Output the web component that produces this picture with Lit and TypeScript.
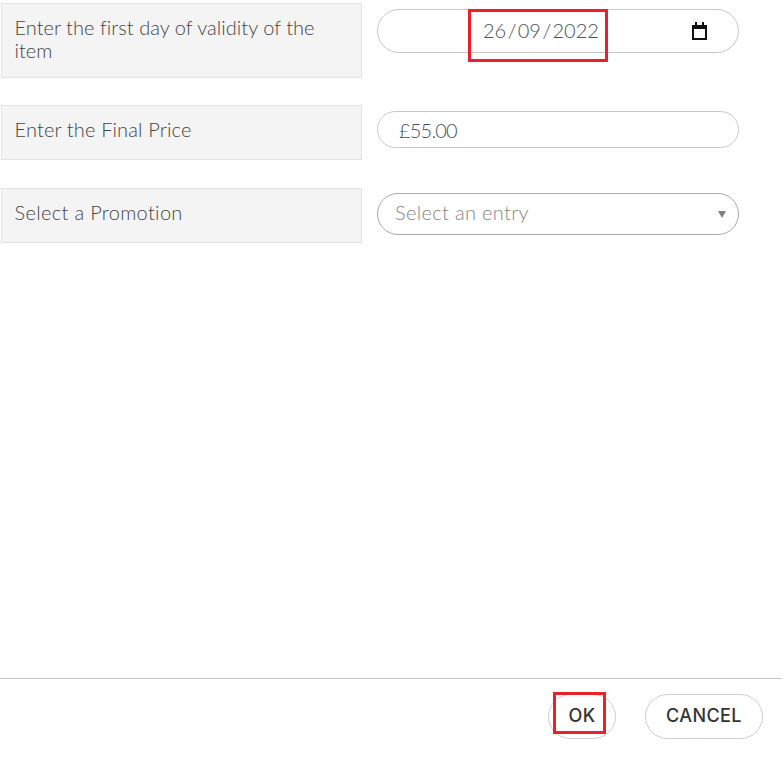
import { LitElement, html, css } from "lit";
import { customElement } from "lit/decorators.js";

@customElement("app-root")
export class AppRoot extends LitElement {
  static styles = css`
    :host {
      display: flex;
      flex-direction: column;
      height: 757px;
      width: 782px;
      background: #fff;
      font-family: "Lato", "Open Sans", sans-serif;
      color: #555;
      box-sizing: border-box;
    }
    * { box-sizing: border-box; }
    .form {
      flex: 1;
      display: flex;
      flex-direction: column;
      padding: 3px 0 0 1px;
    }
    .row {
      display: grid;
      grid-template-columns: 361px 362px;
      column-gap: 15px;
      align-items: start;
    }
    .r1 { height: 75px; margin-bottom: 27px; }
    .r2 { height: 55px; margin-bottom: 28px; }
    .r3 { height: 55px; }
    .label {
      height: 100%;
      background: #f4f4f4;
      border: 1px solid #e3e3e3;
      padding: 0 13px 7px 12.5px;
      display: flex;
      align-items: center;
      font-size: 20px;
      font-weight: 300;
      line-height: 23px;
      color: #444;
    }
    .r1 .label { padding-bottom: 3px; letter-spacing: 0.03px; }
    .r2 .label { letter-spacing: 0.15px; }
    .r3 .label { letter-spacing: 0.33px; }
    .field {
      border: 1px solid #c9c9c9;
      border-radius: 22px;
      display: flex;
      align-items: center;
      background: #fff;
      font-size: 20px;
      font-weight: 300;
      color: #4a505b;
    }
    .date { height: 44px; margin-top: 6px; position: relative; padding: 0 30px 0 105px; justify-content: space-between; }
    .date-text { word-spacing: -4px; margin-top: -2px; }
    .price { height: 37px; margin-top: 6px; padding-left: 21px; letter-spacing: -0.8px; }
    .select { height: 42px; margin-top: 5px; padding: 0 12px 4px 17px; justify-content: space-between; border-color: #a9a9a9; color: #858585; letter-spacing: 0.33px; }
    .caret { width: 0; height: 0; margin-top: 4px; border-left: 4px solid transparent; border-right: 4px solid transparent; border-top: 7px solid #808080; }
    .cal { display: block; }
    .footer {
      height: 79px;
      border-top: 1px solid #c8c8c8;
      display: flex;
      justify-content: flex-end;
      align-items: flex-start;
      gap: 29px;
      padding: 15px 19px 0 0;
    }
    .btn {
      height: 45px;
      border: 1px solid #cfcfcf;
      border-radius: 23px;
      display: flex;
      align-items: center;
      justify-content: center;
      padding-bottom: 3px;
      font-family: "Inter", "Lato", sans-serif;
      font-size: 18px;
      letter-spacing: 0.4px;
      font-weight: 500;
      color: #333;
      background: #fff;
      position: relative;
    }
    .ok { width: 68px; }
    .cancel { width: 118px; }
    .mark { position: absolute; border: 3px solid #ec2029; pointer-events: none; }
    .m1 { left: 90px; top: -1px; width: 140px; height: 53px; }
    .m2 { left: 4px; top: -3px; width: 53px; height: 42px; }
  `;

  render() {
    return html`
      <div class="form">
        <div class="row r1">
          <div class="label">Enter the first day of validity of the item</div>
          <div class="field date">
            <span class="date-text">26 / 09 / 2022</span>
            <svg class="cal" width="16" height="18" viewBox="0 0 16 18"><path d="M1 4h13v13H1z" fill="none" stroke="#111" stroke-width="2"/><path d="M1 3h13v4H1z" fill="#111"/><path d="M4 0v3M11 0v3" stroke="#111" stroke-width="2"/></svg>
            <div class="mark m1"></div>
          </div>
        </div>
        <div class="row r2">
          <div class="label">Enter the Final Price</div>
          <div class="field price">£55.00</div>
        </div>
        <div class="row r3">
          <div class="label">Select a Promotion</div>
          <div class="field select"><span>Select an entry</span><span class="caret"></span></div>
        </div>
      </div>
      <div class="footer">
        <div class="btn ok">OK<div class="mark m2"></div></div>
        <div class="btn cancel">CANCEL</div>
      </div>
    `;
  }
}
